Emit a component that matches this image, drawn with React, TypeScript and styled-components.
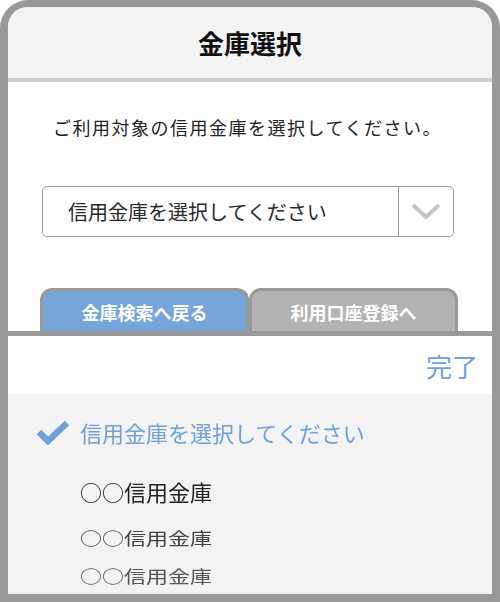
import styled, { createGlobalStyle } from "styled-components";

const GlobalStyle = createGlobalStyle`
  html, body {
    margin: 0;
    padding: 0;
    background: #fff;
  }
  body {
    font-family: "Noto Sans CJK JP", "Noto Sans", sans-serif;
  }
`;

const Frame = styled.div`
  width: 500px;
  height: 602px;
  box-sizing: border-box;
  padding: 7px 8px 8px;
  background: #999;
  border-radius: 28px 28px 0 0;
`;

const Screen = styled.div`
  position: relative;
  height: 100%;
  background: #fff;
  border-radius: 20px 20px 0 0;
  overflow: hidden;
  display: flex;
  flex-direction: column;
`;

const Header = styled.div`
  height: 71px;
  flex-shrink: 0;
  background: #f3f3f3;
  border-bottom: 4px solid #ccc;
  display: flex;
  align-items: center;
  justify-content: center;
  font-size: 26px;
  font-weight: 700;
  color: #111;
`;

const Content = styled.div`
  padding: 32px 0 0 34px;
`;

const Desc = styled.div`
  font-size: 18px;
  letter-spacing: 1.5px;
  color: #222;
  padding-left: 11px;
  line-height: 26px;
`;

const Select = styled.div`
  margin-top: 46px;
  width: 412px;
  height: 51px;
  box-sizing: border-box;
  border: 1.5px solid #999;
  border-radius: 5px;
  display: flex;
`;

const SelectText = styled.div`
  flex: 1;
  display: flex;
  align-items: center;
  padding-left: 25px;
  font-size: 20px;
  color: #2a2a2a;
  border-right: 1.5px solid #999;
`;

const Chevron = styled.div`
  width: 54px;
  display: flex;
  align-items: center;
  justify-content: center;
`;

const Tabs = styled.div`
  margin-top: 51px;
  margin-left: -2px;
  display: flex;
  width: 418px;
`;

const Tab = styled.div<{ $bg: string }>`
  flex: 1;
  height: 60px;
  box-sizing: border-box;
  border: 3px solid #999;
  border-bottom: none;
  border-radius: 12px 12px 0 0;
  background: ${(p) => p.$bg};
  color: #fff;
  font-size: 18px;
  font-weight: 700;
  line-height: 25px;
  text-align: center;
  padding-top: 9px;
`;

const Sheet = styled.div`
  position: absolute;
  left: 0;
  right: 0;
  bottom: 0;
  height: 263px;
  box-sizing: border-box;
  border-top: 5px solid #999;
  display: flex;
  flex-direction: column;
`;

const Toolbar = styled.div`
  height: 58px;
  flex-shrink: 0;
  background: #fff;
  display: flex;
  align-items: center;
  justify-content: flex-end;
  padding-right: 14px;
  font-size: 26px;
  color: #6fa0d8;
`;

const Wheel = styled.div`
  flex: 1;
  background: #f3f3f3;
  padding-top: 18px;
`;

const Option = styled.div<{
  $gap: number;
  $h: number;
  $scale: number;
  $blur: number;
  $color: string;
}>`
  display: flex;
  align-items: center;
  margin-top: ${(p) => p.$gap}px;
  padding-left: 72px;
  height: ${(p) => p.$h}px;
  font-size: 22px;
  color: ${(p) => p.$color};
  transform: scaleY(${(p) => p.$scale});
  transform-origin: left center;
  filter: blur(${(p) => p.$blur}px);
`;

const Check = styled.svg`
  margin-left: -44px;
  margin-right: 10px;
`;

const options = [
  { gap: 19, h: 40, scale: 1, blur: 0, color: "#222" },
  { gap: 10, h: 32, scale: 0.8, blur: 0.6, color: "#444" },
  { gap: 6, h: 32, scale: 0.8, blur: 0.7, color: "#555" },
];

export default function App() {
  return (
    <>
      <GlobalStyle />
      <Frame>
        <Screen>
          <Header>金庫選択</Header>
          <Content>
            <Desc>ご利用対象の信用金庫を選択してください。</Desc>
            <Select>
              <SelectText>信用金庫を選択してください</SelectText>
              <Chevron>
                <svg width="30" height="17" viewBox="0 0 30 17">
                  <polyline
                    points="2,2 15,14 28,2"
                    fill="none"
                    stroke="#c4c4c4"
                    strokeWidth="4"
                  />
                </svg>
              </Chevron>
            </Select>
            <Tabs>
              <Tab $bg="#77a5d9">金庫検索へ戻る</Tab>
              <Tab $bg="#b3b3b3">利用口座登録へ</Tab>
            </Tabs>
          </Content>
          <Sheet>
            <Toolbar>完了</Toolbar>
            <Wheel>
              <Option $gap={0} $h={40} $scale={1} $blur={0} $color="#6fa0d8">
                <Check width="34" height="26" viewBox="0 0 34 26">
                  <polyline
                    points="3,13 12,22 31,4"
                    fill="none"
                    stroke="#6fa0d8"
                    strokeWidth="6.5"
                  />
                </Check>
                信用金庫を選択してください
              </Option>
              {options.map((o, i) => (
                <Option
                  key={i}
                  $gap={o.gap}
                  $h={o.h}
                  $scale={o.scale}
                  $blur={o.blur}
                  $color={o.color}
                >
                  ○○信用金庫
                </Option>
              ))}
            </Wheel>
          </Sheet>
        </Screen>
      </Frame>
    </>
  );
}
